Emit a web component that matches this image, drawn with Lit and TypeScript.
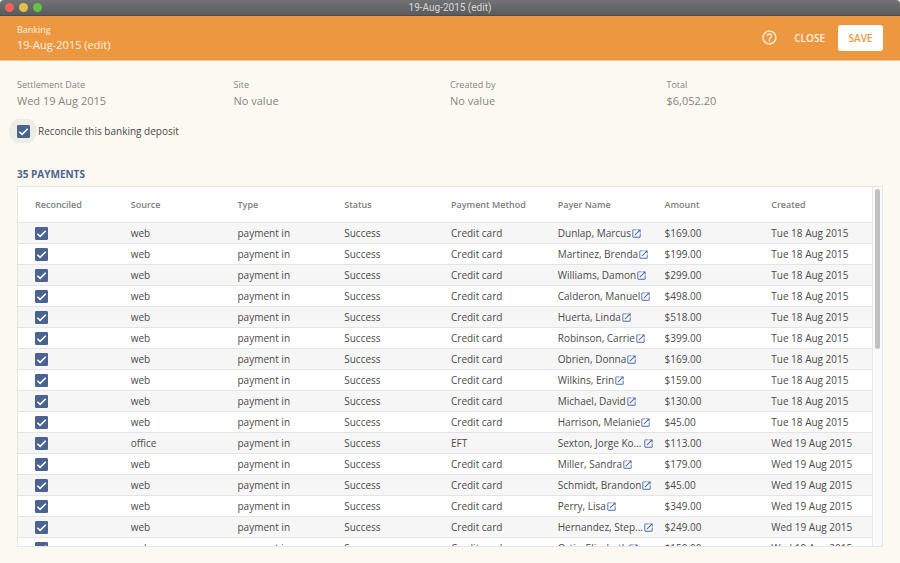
import { LitElement, html, css, svg } from "lit";
import { customElement, property } from "lit/decorators.js";

interface Payment {
  source: string;
  method: string;
  payer: string;
  amount: string;
  created: string;
}

const TUE = "Tue 18 Aug 2015";
const WED = "Wed 19 Aug 2015";

const pay = (payer: string, amount: string, created: string, source = "web", method = "Credit card"): Payment => ({
  source,
  method,
  payer,
  amount,
  created,
});

const PAYMENTS: Payment[] = [
  pay("Dunlap, Marcus", "$169.00", TUE),
  pay("Martinez, Brenda", "$199.00", TUE),
  pay("Williams, Damon", "$299.00", TUE),
  pay("Calderon, Manuel", "$498.00", TUE),
  pay("Huerta, Linda", "$518.00", TUE),
  pay("Robinson, Carrie", "$399.00", TUE),
  pay("Obrien, Donna", "$169.00", TUE),
  pay("Wilkins, Erin", "$159.00", TUE),
  pay("Michael, David", "$130.00", TUE),
  pay("Harrison, Melanie", "$45.00", TUE),
  pay("Sexton, Jorge Ko...", "$113.00", WED, "office", "EFT"),
  pay("Miller, Sandra", "$179.00", WED),
  pay("Schmidt, Brandon", "$45.00", WED),
  pay("Perry, Lisa", "$349.00", WED),
  pay("Hernandez, Step...", "$249.00", WED),
  pay("Ortiz, Elizabeth", "$150.00", WED),
];

const COLUMNS = ["Reconciled", "Source", "Type", "Status", "Payment Method", "Payer Name", "Amount", "Created"];

const openIcon = svg`<path d="M19 19H5V5h7V3H5c-1.11 0-2 .9-2 2v14c0 1.1.89 2 2 2h14c1.1 0 2-.9 2-2v-7h-2v7zM14 3v2h3.59l-9.83 9.83 1.41 1.41L19 6.41V10h2V3h-7z"/>`;
const helpIcon = svg`<path d="M11 18h2v-2h-2v2zm1-16C6.48 2 2 6.48 2 12s4.48 10 10 10 10-4.48 10-10S17.52 2 12 2zm0 18c-4.41 0-8-3.59-8-8s3.59-8 8-8 8 3.59 8 8-3.59 8-8 8zm0-14c-2.21 0-4 1.79-4 4h2c0-1.1.9-2 2-2s2 .9 2 2c0 2-3 1.75-3 5h2c0-2.25 3-2.5 3-5 0-2.21-1.79-4-4-4z"/>`;

@customElement("check-box")
export class CheckBox extends LitElement {
  @property() label = "";
  @property({ type: Boolean }) caption = false;

  static styles = css`
    :host {
      display: inline-flex;
      vertical-align: top;
    }
    .wrap {
      display: flex;
      align-items: center;
    }
    .box {
      display: grid;
      place-items: center;
    }
    .halo {
      width: 28px;
      height: 24px;
      background: radial-gradient(circle 14px, #edede7 96%, transparent 100%);
    }
    input,
    svg {
      grid-area: 1 / 1;
      width: 13px;
      height: 13px;
    }
    input {
      appearance: none;
      margin: 0;
      border: 1px solid #4b6390;
      border-radius: 1px;
      background: #fff;
    }
    input:checked {
      background: #4b6390;
    }
    svg {
      visibility: hidden;
      pointer-events: none;
      fill: none;
      stroke: #fff;
      stroke-width: 1.5;
    }
    input:checked + svg {
      visibility: visible;
    }
    .text {
      margin-left: 1px;
      line-height: 16px;
    }
  `;

  render() {
    return html`<label class="wrap">
      <span class="box ${this.caption ? "halo" : ""}">
        <input type="checkbox" checked aria-label=${this.label} />
        <svg viewBox="0 0 13 13"><path d="M2.4 6.7 5.1 9.4 10.8 3.7" /></svg>
      </span>
      ${this.caption ? html`<span class="text">${this.label}</span>` : ""}
    </label>`;
  }
}

@customElement("app-root")
export class AppRoot extends LitElement {
  static styles = css`
    :host {
      display: flex;
      flex-direction: column;
      height: 100vh;
      overflow: hidden;
      background: #fcf9f2;
      color: #4a4a49;
      font: 10px/16px "Open Sans", "Noto Sans", sans-serif;
    }
    .titlebar {
      display: grid;
      grid-template-columns: 1fr auto 1fr;
      align-items: center;
      height: 16px;
      padding: 0 5px;
      box-sizing: border-box;
      flex: none;
      border-bottom: 1px solid #514a45;
      border-radius: 4px 4px 0 0;
      background: linear-gradient(#717273, #5a5b5c);
      color: #d8d8d8;
      font: 10px/15px Roboto, Inter, sans-serif;
    }
    .lights {
      display: flex;
      gap: 5px;
    }
    .light {
      width: 9px;
      height: 9px;
      border-radius: 50%;
    }
    .red {
      background: #ee6357;
    }
    .yellow {
      background: #e0c04c;
    }
    .green {
      background: #68bf45;
    }
    .appbar {
      display: flex;
      align-items: center;
      flex: none;
      padding: 6px 17px 7px;
      border-bottom: 1px solid #f6c994;
      background: #ec9840;
      color: #fdf1e2;
    }
    .heading {
      flex: 1;
    }
    .kicker {
      font-size: 9px;
      line-height: 15px;
    }
    h1 {
      margin: 0;
      font-size: 11px;
      line-height: 16px;
      font-weight: 400;
    }
    button {
      border: 0;
      padding: 0;
      background: none;
      color: inherit;
      font: 600 10px/26px "Open Sans", "Noto Sans", sans-serif;
    }
    .help {
      display: flex;
      margin-right: 16px;
    }
    .help svg {
      width: 17px;
      height: 17px;
      fill: currentColor;
    }
    .save {
      width: 45px;
      margin-left: 13px;
      border-radius: 3px;
      background: #fff;
      color: #ec9840;
    }
    main {
      display: flex;
      flex-direction: column;
      flex: 1;
      min-height: 0;
      padding: 16px 17px;
    }
    dl {
      display: grid;
      grid-template-columns: repeat(4, 1fr);
      margin: 0;
      color: #868580;
    }
    dt {
      font-size: 9px;
      line-height: 16px;
    }
    dd {
      margin: 0;
      font-size: 11px;
      line-height: 16px;
    }
    .reconcile {
      display: flex;
      margin: 10px 0 0 -8px;
    }
    h2 {
      margin: 23px 0 4px;
      color: #4b6390;
      font-size: 10px;
      line-height: 16px;
      font-weight: 700;
    }
    .grid {
      display: flex;
      flex: 1;
      min-height: 0;
      border: 1px solid #e6e6e4;
      background: #fff;
    }
    .rows {
      flex: 1;
      overflow: auto;
      scrollbar-width: none;
    }
    .track {
      width: 10px;
      box-sizing: border-box;
      padding: 2px;
      border-left: 1px solid #e8e8e8;
      background: #fafafa;
    }
    .thumb {
      height: 45%;
      border-radius: 3px;
      background: #c1c1c1;
    }
    table {
      width: 100%;
      table-layout: fixed;
      border-collapse: separate;
      border-spacing: 0;
    }
    th,
    td {
      box-sizing: border-box;
      padding: 0 5px 0 6px;
      border-bottom: 1px solid #e4e4e4;
      text-align: left;
      white-space: nowrap;
    }
    th {
      height: 36px;
      color: #7d7d7d;
      font-size: 9px;
      font-weight: 600;
    }
    td {
      height: 21px;
      line-height: 20px;
    }
    th:first-child,
    td:first-child {
      padding-left: 17px;
    }
    tbody tr:nth-child(odd) {
      background: #f6f6f6;
    }
    .tick {
      display: flex;
      height: 20px;
      align-items: center;
    }
    .payer {
      display: flex;
      align-items: center;
    }
    .cut {
      flex: 1;
    }
    .open {
      display: flex;
      color: #4a6aa5;
    }
    .open svg {
      width: 11px;
      height: 11px;
      fill: currentColor;
    }
  `;

  private field(label: string, value: string) {
    return html`<div><dt>${label}</dt><dd>${value}</dd></div>`;
  }

  private row(p: Payment) {
    return html`<tr>
      <td><span class="tick"><check-box label="Reconciled"></check-box></span></td>
      <td>${p.source}</td>
      <td>payment in</td>
      <td>Success</td>
      <td>${p.method}</td>
      <td>
        <div class="payer">
          <span class=${p.payer.endsWith("...") ? "cut" : ""}>${p.payer}</span>
          <a class="open" href="#" aria-label="Open ${p.payer}"><svg viewBox="0 0 24 24">${openIcon}</svg></a>
        </div>
      </td>
      <td>${p.amount}</td>
      <td>${p.created}</td>
    </tr>`;
  }

  render() {
    return html`
      <div class="titlebar">
        <div class="lights">
          <span class="light red"></span><span class="light yellow"></span><span class="light green"></span>
        </div>
        <span>19-Aug-2015 (edit)</span>
      </div>
      <header class="appbar">
        <div class="heading">
          <div class="kicker">Banking</div>
          <h1>19-Aug-2015 (edit)</h1>
        </div>
        <button class="help" aria-label="Help"><svg viewBox="0 0 24 24">${helpIcon}</svg></button>
        <button>CLOSE</button>
        <button class="save">SAVE</button>
      </header>
      <main>
        <dl>
          ${this.field("Settlement Date", "Wed 19 Aug 2015")} ${this.field("Site", "No value")}
          ${this.field("Created by", "No value")} ${this.field("Total", "$6,052.20")}
        </dl>
        <div class="reconcile"><check-box caption label="Reconcile this banking deposit"></check-box></div>
        <h2>35 PAYMENTS</h2>
        <div class="grid">
          <div class="rows">
            <table>
              <thead>
                <tr>${COLUMNS.map((c) => html`<th scope="col">${c}</th>`)}</tr>
              </thead>
              <tbody>${PAYMENTS.map((p) => this.row(p))}</tbody>
            </table>
          </div>
          <div class="track"><div class="thumb"></div></div>
        </div>
      </main>
    `;
  }
}
